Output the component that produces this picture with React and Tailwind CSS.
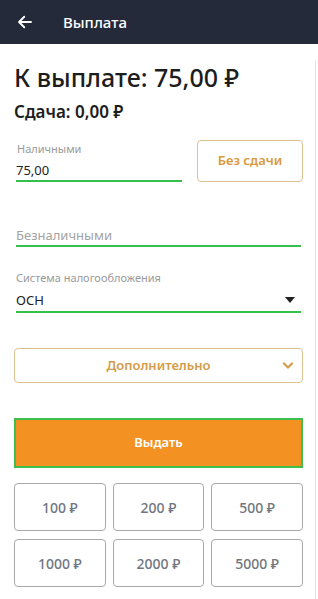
import React, { useState } from "react";

const amounts = ["100 ₽", "200 ₽", "500 ₽", "1000 ₽", "2000 ₽", "5000 ₽"];

function App() {
  const [cash, setCash] = useState("75,00");

  return (
    <div className="w-[318px] h-[599px] bg-white overflow-hidden" style={{ fontFamily: '"Noto Sans", "Open Sans", sans-serif' }}>
      <div className="h-[44px] bg-[#252a3b] flex items-center px-4">
        <svg width="18" height="18" viewBox="0 0 24 24" fill="none" stroke="white" strokeWidth="2.4" strokeLinecap="round" strokeLinejoin="round">
          <path d="M20 12H5" />
          <path d="M11 5l-7 7 7 7" />
        </svg>
        <span className="ml-[29px] text-white text-[15px] font-medium">Выплата</span>
      </div>

      <div className="w-[316px] h-[555px] border-r border-[#e3e3e3] px-[14px]">
        <h1 className="mt-[16px] text-[25px] leading-[34px] font-medium text-[#1d1d1d]">К выплате: 75,00 ₽</h1>
        <div className="mt-[6px] text-[17px] leading-[24px] font-semibold text-[#1d1d1d]">Сдача: 0,00 ₽</div>

        <div className="mt-[16px] flex items-start">
          <div className="w-[166px] ml-[2px] pt-[2px]">
            <div className="text-[11px] text-[#9a9a9a] leading-[14px] pl-[1px]">Наличными</div>
            <input
              value={cash}
              onChange={(e) => setCash(e.target.value)}
              className="w-full text-[13px] text-[#222] leading-[18px] mt-[5px] pb-[1px] outline-none border-b-2 border-[#34c04a] bg-transparent"
            />
          </div>
          <button className="ml-auto mr-[-2px] w-[106px] h-[42px] border border-[#dcc28f] rounded-[4px] text-[13px] font-semibold text-[#d89a3c]">
            Без сдачи
          </button>
        </div>

        <div className="mt-[44px] ml-[2px] w-[285px] border-b-2 border-[#34c04a] pb-[1px]">
          <div className="text-[13px] text-[#a3a3a3] leading-[18px]">Безналичными</div>
        </div>

        <div className="mt-[24px] ml-[2px] w-[285px]">
          <div className="text-[11px] text-[#9a9a9a] leading-[14px]">Система налогообложения</div>
          <div className="mt-[6px] flex items-center justify-between border-b-2 border-[#34c04a] pb-[2px]">
            <span className="text-[13px] text-[#222] leading-[18px]">ОСН</span>
            <svg width="10" height="6" viewBox="0 0 10 6" className="mr-[6px]">
              <path d="M0 0h10L5 6z" fill="#222" />
            </svg>
          </div>
        </div>

        <button className="mt-[35px] w-[289px] h-[35px] border border-[#dcc28f] rounded-[4px] relative flex items-center justify-center">
          <span className="text-[13px] font-semibold text-[#d39c4a]">Дополнительно</span>
          <svg className="absolute right-[8px] top-[12px]" width="12" height="9" viewBox="0 0 12 8" fill="none" stroke="#d39c4a" strokeWidth="2.2" strokeLinecap="round" strokeLinejoin="round">
            <path d="M2 2l4 4 4-4" />
          </svg>
        </button>

        <button className="mt-[35px] w-[289px] h-[50px] bg-[#f39223] border-2 border-[#3cbf4c] text-white text-[13px] font-semibold">
          Выдать
        </button>

        <div className="mt-[15px] w-[289px] grid grid-cols-3 gap-x-[7px] gap-y-[8px]">
          {amounts.map((a) => (
            <button key={a} className="h-[48px] border border-[#a9a9a9] rounded-[4px] text-[14px] font-medium text-[#6f7680]">
              {a}
            </button>
          ))}
        </div>
      </div>
    </div>
  );
}

export default App;
